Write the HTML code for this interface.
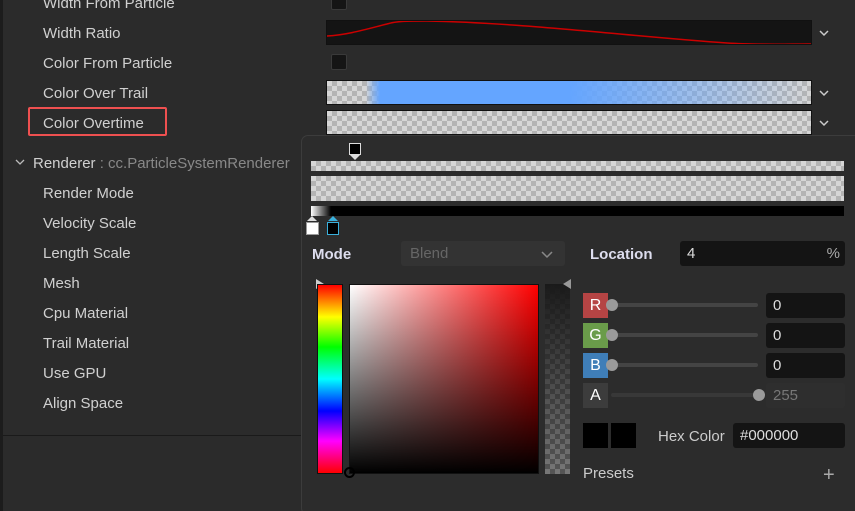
<!DOCTYPE html>
<html><head><meta charset="utf-8"><style>
*{margin:0;padding:0;box-sizing:border-box}
html{overflow:hidden;width:855px;height:511px}
body{width:855px;height:511px;overflow:hidden;background:#2b2b2b;font-family:"Liberation Sans",Arial,sans-serif;font-size:15px;color:#d0d0d0;position:relative}
.a{position:absolute}
.lbl{position:absolute;left:43px;line-height:20px}
.chk{position:absolute;left:331px;width:16px;height:16px;background:#151515;border:1px solid #3a3a3a;border-radius:2px}
.fld{position:absolute;left:326px;width:486px;border:1px solid #111}
.chev{position:absolute;left:818px;width:12px;height:10px}
.checker{background-color:#d6d6d6;background-image:linear-gradient(45deg,#b4b4b4 25%,transparent 25%,transparent 75%,#b4b4b4 75%),linear-gradient(45deg,#b4b4b4 25%,transparent 25%,transparent 75%,#b4b4b4 75%);background-size:10px 10px;background-position:0 0,5px 5px}
.box{position:absolute;left:583px;width:25px;height:25px;color:#fff;font-size:16px;text-align:center;line-height:25px}
.trk{position:absolute;left:611px;width:147px;height:4px;background:#444;border-radius:2px}
.knob{position:absolute;width:12px;height:12px;border-radius:6px;background:#9a9a9a}
.inp{position:absolute;background:#141414;border-radius:3px;color:#ddd;font-size:15px;line-height:25px;padding-left:7px}
</style></head><body>
<div class="a" style="left:0;top:0;width:3px;height:511px;background:#1c1c1c"></div>
<div class="a" style="left:3px;top:435px;width:298px;height:1px;background:#1a1a1a"></div>

<div class="lbl" style="top:-6px">Width From Particle</div>
<div class="chk" style="top:-6px"></div>
<div class="lbl" style="top:24px">Width Ratio</div>
<div class="fld" style="top:20px;height:25px;background:#141414">
<svg width="484" height="23" style="position:absolute;left:0;top:0"><path d="M0 15 C20 14 40 8 60 3 C70 0 80 0 100 0 C200 2 300 15 400 22 C430 24 460 23 484 23" stroke="#c00" stroke-width="1.5" fill="none"/></svg></div>
<svg class="chev" style="top:28px" viewBox="0 0 12 10"><path d="M2 3l4 4 4-4" stroke="#ccc" stroke-width="1.5" fill="none"/></svg>
<div class="lbl" style="top:54px">Color From Particle</div>
<div class="chk" style="top:54px"></div>
<div class="lbl" style="top:84px">Color Over Trail</div>
<div class="fld checker" style="top:80px;height:25px"><div style="position:absolute;inset:0;background:linear-gradient(90deg,rgba(100,165,255,0) 0%,rgba(100,165,255,0) 8%,rgba(100,165,255,1) 11%,rgba(100,165,255,1) 50%,rgba(100,165,255,0.5) 75%,rgba(100,165,255,0) 100%)"></div></div>
<svg class="chev" style="top:88px" viewBox="0 0 12 10"><path d="M2 3l4 4 4-4" stroke="#ccc" stroke-width="1.5" fill="none"/></svg>
<div class="a" style="left:28px;top:107px;width:139px;height:29px;border:2px solid #ef5050;border-radius:2px"></div>
<div class="lbl" style="top:114px">Color Overtime</div>
<div class="fld checker" style="top:110px;height:25px"></div>
<svg class="chev" style="top:118px" viewBox="0 0 12 10"><path d="M2 3l4 4 4-4" stroke="#ccc" stroke-width="1.5" fill="none"/></svg>

<svg class="a" style="left:14px;top:157px" width="12" height="10"><path d="M2 3l4 4 4-4" stroke="#bbb" stroke-width="1.3" fill="none"/></svg>
<div class="lbl" style="left:33px;top:154px">Renderer <span style="color:#888">: cc.ParticleSystemRenderer</span></div>
<div class="lbl" style="top:184px">Render Mode</div>
<div class="lbl" style="top:214px">Velocity Scale</div>
<div class="lbl" style="top:244px">Length Scale</div>
<div class="lbl" style="top:274px">Mesh</div>
<div class="lbl" style="top:304px">Cpu Material</div>
<div class="lbl" style="top:334px">Trail Material</div>
<div class="lbl" style="top:364px">Use GPU</div>
<div class="lbl" style="top:394px">Align Space</div>

<!-- popup -->
<div class="a" style="left:301px;top:135px;width:560px;height:380px;background:#2c2c2c;border:1px solid #3c3c3c;border-radius:7px"></div>
<div class="a" style="left:349px;top:143px;width:12px;height:12px;background:#000;border:1px solid #ddd"></div>
<div class="a" style="left:350px;top:155px;width:0;height:0;border-left:5px solid transparent;border-right:5px solid transparent;border-top:5px solid #ddd"></div>
<div class="a checker" style="left:311px;top:161px;width:533px;height:10px"></div>
<div class="a checker" style="left:311px;top:176px;width:533px;height:25px"></div>
<div class="a" style="left:311px;top:206px;width:533px;height:10px;background:linear-gradient(90deg,#fff 0px,#000 20px,#000)"></div>
<div class="a" style="left:307px;top:216px;width:0;height:0;border-left:5px solid transparent;border-right:5px solid transparent;border-bottom:5px solid #ddd"></div>
<div class="a" style="left:306px;top:222px;width:13px;height:13px;background:#fff;border:1px solid #999"></div>
<div class="a" style="left:328px;top:216px;width:0;height:0;border-left:5px solid transparent;border-right:5px solid transparent;border-bottom:5px solid #3ab0dc"></div>
<div class="a" style="left:327px;top:222px;width:12px;height:13px;background:#000;border:1px solid #3ab0dc"></div>

<div class="a" style="left:312px;top:246px;font-weight:bold;color:#dde">Mode</div>
<div class="a" style="left:401px;top:241px;width:164px;height:25px;background:#333;border-radius:3px;color:#666;line-height:25px;padding-left:9px">Blend</div>
<svg class="a" style="left:540px;top:248px" width="14" height="12"><path d="M2 4l5 5 5-5" stroke="#888" stroke-width="1.5" fill="none"/></svg>
<div class="a" style="left:590px;top:246px;font-weight:bold;color:#dde">Location</div>
<div class="inp" style="left:680px;top:241px;width:165px">4<span style="position:absolute;right:5px;color:#aaa">%</span></div>

<div class="a" style="left:316px;top:279px;width:0;height:0;border-top:5px solid transparent;border-bottom:5px solid transparent;border-left:8px solid #ccc"></div>
<div class="a" style="left:317px;top:284px;width:26px;height:190px;border:1px solid #111;background:linear-gradient(#f00,#ff0 17%,#0f0 33%,#0ff 50%,#00f 67%,#f0f 83%,#f00)"></div>
<div class="a" style="left:349px;top:284px;width:190px;height:190px;border:1px solid #111;background:linear-gradient(to bottom,rgba(0,0,0,0),#000),linear-gradient(to right,#fff,#f00)"></div>
<div class="a" style="left:344px;top:467px;width:11px;height:11px;border:2px solid #000;border-radius:6px"></div>
<div class="a checker" style="left:545px;top:284px;width:25px;height:190px;background-color:#555;background-image:linear-gradient(45deg,#777 25%,transparent 25%,transparent 75%,#777 75%),linear-gradient(45deg,#777 25%,transparent 25%,transparent 75%,#777 75%)"><div style="position:absolute;inset:0;background:linear-gradient(#1a1a1a,rgba(0,0,0,0))"></div></div>
<div class="a" style="left:563px;top:279px;width:0;height:0;border-top:5px solid transparent;border-bottom:5px solid transparent;border-right:8px solid #999"></div>

<div class="box" style="top:293px;background:#b54444">R</div>
<div class="trk" style="top:303px"></div><div class="knob" style="left:606px;top:299px"></div>
<div class="inp" style="left:766px;top:293px;width:79px">0</div>
<div class="box" style="top:323px;background:#6a9c4a">G</div>
<div class="trk" style="top:333px"></div><div class="knob" style="left:606px;top:329px"></div>
<div class="inp" style="left:766px;top:323px;width:79px">0</div>
<div class="box" style="top:353px;background:#3f7eb8">B</div>
<div class="trk" style="top:363px"></div><div class="knob" style="left:606px;top:359px"></div>
<div class="inp" style="left:766px;top:353px;width:79px">0</div>
<div class="box" style="top:383px;background:#3c3c3c">A</div>
<div class="trk" style="top:393px;background:#383838"></div><div class="knob" style="left:753px;top:389px"></div>
<div class="inp" style="left:766px;top:383px;width:79px;background:#2e2e2e;color:#777">255</div>

<div class="a" style="left:583px;top:423px;width:25px;height:25px;background:#000"></div>
<div class="a" style="left:611px;top:423px;width:25px;height:25px;background:#000"></div>
<div class="a" style="left:658px;top:428px;color:#ccc">Hex Color</div>
<div class="inp" style="left:733px;top:423px;width:112px">#000000</div>
<div class="a" style="left:583px;top:465px;color:#ccc">Presets</div>
<div class="a" style="left:823px;top:464px;color:#aaa;font-size:20px">+</div>
</body></html>
